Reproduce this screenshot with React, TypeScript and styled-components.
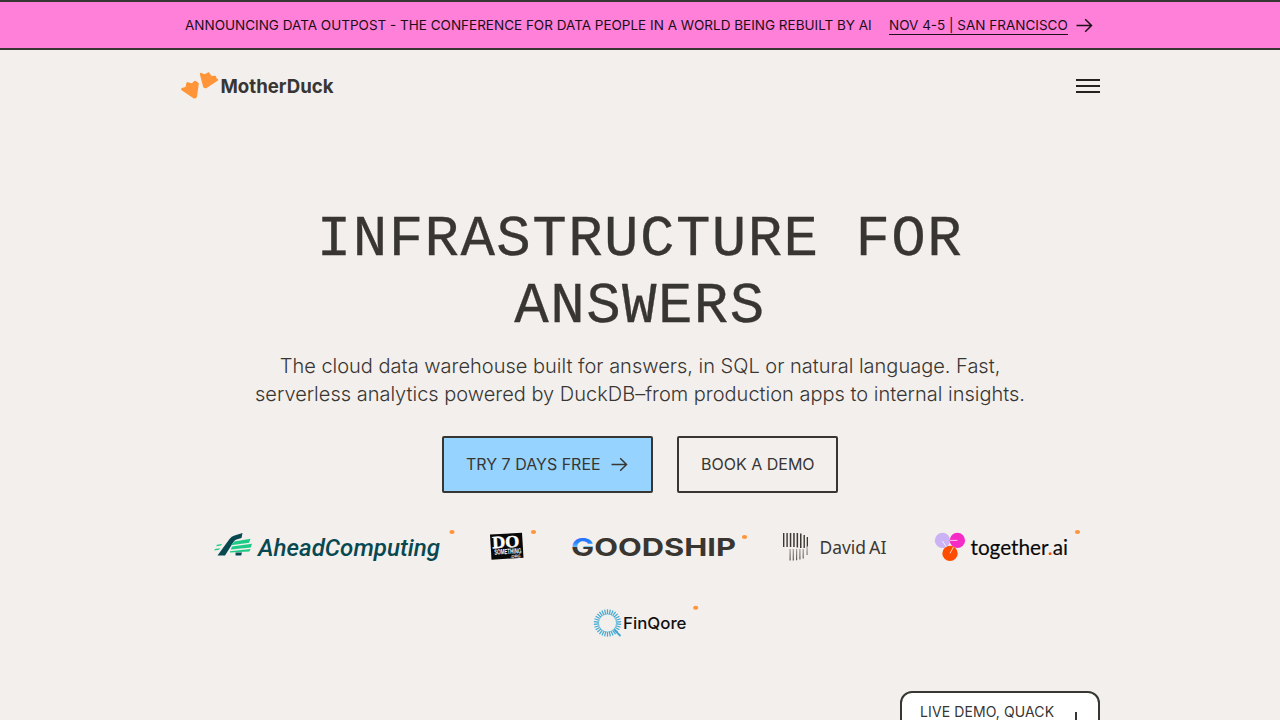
import React from "react";
import styled, { createGlobalStyle } from "styled-components";

const INK = "#383633";

const GlobalStyle = createGlobalStyle`
  * { box-sizing: border-box; }
  body { margin: 0; background: #f3efec; color: ${INK}; font-family: Inter, "Liberation Sans", sans-serif; }
`;

const Page = styled.div`
  height: 720px;
  overflow: hidden;
  display: flex;
  flex-direction: column;
  position: relative;
`;

const Banner = styled.a`
  height: 50px;
  flex: none;
  display: flex;
  align-items: center;
  padding-left: 185px;
  background: #ff80d9;
  border-top: 2px solid ${INK};
  border-bottom: 2px solid ${INK};
  color: #1c0f18;
  font-size: 13.5px;
  line-height: 20px;
  white-space: nowrap;
`;

const BannerText = styled.span`
  width: 704px;
`;

const BannerLink = styled.span`
  width: 179px;
  height: 20px;
  border-bottom: 1px solid #1c0f18;
  margin-right: 8px;
`;

const Header = styled.header`
  height: 72px;
  flex: none;
  display: flex;
  align-items: center;
  justify-content: space-between;
  padding: 0 180px;
`;

const Menu = styled.button`
  width: 24px;
  height: 14px;
  padding: 0;
  border: 0;
  background: none;
  display: flex;
  flex-direction: column;
  justify-content: space-between;
`;

const MenuBar = styled.span`
  width: 24px;
  height: 2px;
  background: #24211f;
`;

const Hero = styled.main`
  display: flex;
  flex-direction: column;
  align-items: center;
  padding-top: 84px;
`;

const Title = styled.h1`
  margin: 0;
  font: 400 57.5px/67px "Liberation Mono", monospace;
  letter-spacing: 1.4px;
  -webkit-text-stroke: 0.3px ${INK};
  text-align: center;
  width: 760px;
`;

const Lead = styled.p`
  margin: 12px 0 0;
  font-size: 20px;
  line-height: 28px;
  font-weight: 300;
  text-align: center;
  white-space: nowrap;
`;

const Actions = styled.div`
  display: flex;
  gap: 24px;
  margin-top: 28px;
`;

const Button = styled.a<{ $primary?: boolean; $width: number }>`
  width: ${(p) => p.$width}px;
  height: 57px;
  border: 2px solid ${INK};
  border-radius: 2px;
  background: ${(p) => (p.$primary ? "#96d4ff" : "transparent")};
  display: flex;
  align-items: center;
  padding: 0 0 1px 22px;
  gap: 10px;
  font-size: 16px;
  white-space: nowrap;
`;

const Logos = styled.div`
  display: flex;
  flex-wrap: wrap;
  justify-content: center;
  gap: 40px 34px;
  width: 920px;
  padding-left: 14px;
  margin-top: 36px;
`;

const Chat = styled.aside`
  position: absolute;
  left: 900px;
  top: 691px;
  width: 200px;
  height: 70px;
  padding: 10px 12px 0 18px;
  border: 2px solid ${INK};
  border-radius: 12px;
  background: #fff;
  display: flex;
  justify-content: space-between;
  font-size: 14px;
  line-height: 18px;
  letter-spacing: 0.1px;
  white-space: nowrap;
`;

const PlusIcon = styled.svg`
  flex: none;
  margin-top: 9px;
`;

const Arrow = ({ color = INK }: { color?: string }) => (
  <svg width="18" height="16" viewBox="0 0 18 16" fill="none" stroke={color} strokeWidth="1.5">
    <path d="M.5 8.5h15M9.2 2.2l6.3 6.3-6.3 6.3" />
  </svg>
);

const Dot = ({ x, y = 532 }: { x: number; y?: number }) => (
  <ellipse cx={x} cy={y} rx="2.6" ry="2" fill="#ff9538" />
);

const MotherDuck = () => (
  <svg width="156" height="32" viewBox="180 70 156 32">
    <g fill="#ff9538" stroke="#ff9538" strokeWidth="2.4" strokeLinejoin="round">
      <path d="M201 74l3.5 1.8 4-2.2 2.3 3.5 4.2-.2.5 2.6 1.5.2-11 7.3-1.6-.3z" />
      <path d="M182.3 89.2l4.2-1.4 1.1-4.5 4.5 1.3 3-2.7 2.5 1.8-1.8 12.8-1.3.9z" />
    </g>
    <text x="220.5" y="92.7" fontSize="19" fontWeight="700" textLength="113" lengthAdjust="spacingAndGlyphs" fill={INK}>MotherDuck</text>
  </svg>
);

const AheadComputing = () => (
  <svg width="242" height="36" viewBox="213 529 242 36">
    <g fill="#084850">
      <path d="M217.5 555.5l12-16.5q2-2.8 5-3.6l8-2.4-1 5-5 1.6q-2 .6-3.2 2.6l-8.3 13.3z" />
      <path d="M235.5 552.5h6.5l-.8 3h-5.6z" />
    </g>
    <g fill="#1dcb86">
      <path d="M234.5 541.5l16-2.8-1.4 4-18.3 2.6zM232 546.6l20-2.8-1.2 3.6-20 2.2zM230 551.2l20.6-2.3-1.2 2.6-19.4 1z" />
      <path d="M217 544.7l5-.8-1 1.6-4.8.7zM215 549l5-.8-1 1.6-4.8.7z" />
    </g>
    <text x="258" y="555.8" fontFamily="Roboto, sans-serif" fontStyle="italic" fontWeight="500" fontSize="23.5" textLength="182" lengthAdjust="spacingAndGlyphs" fill="#084850">AheadComputing</text>
    <Dot x={452} />
  </svg>
);

const DoSomething = () => (
  <svg width="48" height="36" viewBox="489 529 48 36">
    <path d="M490 534.5l32-1.8 1.5 25-32 2z" fill="#090909" />
    <g fill="#fff" fontWeight="700" transform="rotate(-3 507 547)">
      <text x="492.5" y="547.5" fontFamily="Liberation Serif, serif" fontSize="17" textLength="27" lengthAdjust="spacingAndGlyphs" stroke="#fff" strokeWidth=".5">DO</text>
      <text x="494" y="554" fontFamily="Liberation Sans, sans-serif" fontSize="7.5" textLength="27" lengthAdjust="spacingAndGlyphs">SOMETHING</text>
      <text x="510" y="558" fontFamily="Liberation Sans, sans-serif" fontSize="4" textLength="10">.ORG</text>
    </g>
    <Dot x={533.5} />
  </svg>
);

const Goodship = () => (
  <svg width="177" height="36" viewBox="571 529 177 36">
    <defs>
      <linearGradient id="goodship" gradientUnits="userSpaceOnUse" x1="578" y1="537" x2="578" y2="556">
        <stop offset="0" stopColor="#246bff" />
        <stop offset=".3" stopColor="#2d83ff" />
        <stop offset=".52" stopColor="#5cc6f8" />
        <stop offset=".54" stopColor="#393631" />
        <stop offset="1" stopColor="#393631" />
      </linearGradient>
    </defs>
    <text x="571" y="556" fontSize="24.5" fontWeight="700" textLength="165" lengthAdjust="spacingAndGlyphs" fill="#393631">
      <tspan fill="url(#goodship)">G</tspan>OODSHIP
    </text>
    <Dot x={744.5} y={537} />
  </svg>
);

const DavidAI = () => (
  <svg width="118" height="36" viewBox="782 529 118 36">
    <defs>
      <linearGradient id="david" x1="0" y1="0" x2="0" y2="1">
        <stop offset="0" stopColor="#b6b1ad" />
        <stop offset="1" stopColor="#57524e" />
      </linearGradient>
    </defs>
    <path fill="#3c3834" d="M783 533h1.4v14H783zM786.4 533h1.4v14h-1.4zM789.8 533h1.5v14h-1.5zM793.2 533h1.5v14h-1.5zM796.6 533h1.5v14.5h-1.5zM800 533.6h1.5V548H800zM803.5 535h1.4v13h-1.4zM806.7 537h1.3v10h-1.3z" />
    <path fill="url(#david)" d="M789.5 549h1.2v11.5h-1.2zM792.7 549h1.2v11.5h-1.2zM796 549h1.2v11.3H796zM799.3 549h1.2v10.5h-1.2zM802.6 549h1.2v9.5h-1.2zM806.5 546h1.2v9h-1.2z" />
    <text x="819.5" y="554" fontFamily="Noto Sans, sans-serif" fontSize="18" textLength="46.5" lengthAdjust="spacingAndGlyphs" fill="#3c3834">David</text>
    <text x="869" y="554" fontFamily="Noto Sans, sans-serif" fontSize="18" textLength="17.5" lengthAdjust="spacingAndGlyphs" fill="#3c3834">AI</text>
  </svg>
);

const Together = () => (
  <svg width="147" height="36" viewBox="934 529 147 36">
    <circle cx="942.5" cy="540.4" r="7.7" fill="#cab2f4" />
    <circle cx="957.4" cy="540.4" r="7.7" fill="#f52bc5" />
    <circle cx="950" cy="553.4" r="7.7" fill="#ff4d00" />
    <g stroke="#fff" strokeOpacity=".75" strokeWidth="1">
      <path d="M942.5 541l3.8 6M950 540.4h7.4M950 553.4l3.5-6.5" />
    </g>
    <text x="970.5" y="555" fontFamily="Lato, sans-serif" fontSize="21.5" textLength="97.5" lengthAdjust="spacingAndGlyphs" fill="#090909" stroke="#090909" strokeWidth=".15">
      together<tspan fill="#ff4d00" stroke="#ff4d00">.</tspan>ai
    </text>
    <Dot x={1077.5} />
  </svg>
);

const FinQore = () => (
  <svg width="108" height="36" viewBox="593 605 108 36">
    <g stroke="#40a8d2" strokeWidth="1.2">
      {Array.from({ length: 30 }, (_, i) => (
        <path key={i} d="M607.5 614v-4.7" transform={`rotate(${i * 12} 607.5 623)`} />
      ))}
      <path d="M614.5 630l6 6" strokeWidth="1.8" />
    </g>
    <circle cx="607.5" cy="623" r="9" fill="none" stroke="#55b6dc" strokeWidth=".8" />
    <text x="623" y="629.3" fontSize="16.5" fontWeight="500" textLength="63.5" lengthAdjust="spacingAndGlyphs" fill="#111">FinQore</text>
    <Dot x={695.7} y={607.8} />
  </svg>
);

export default function App() {
  return (
    <Page>
      <GlobalStyle />
      <Banner>
        <BannerText>ANNOUNCING DATA OUTPOST - THE CONFERENCE FOR DATA PEOPLE IN A WORLD BEING REBUILT BY AI</BannerText>
        <BannerLink>NOV 4-5 | SAN FRANCISCO</BannerLink>
        <Arrow color="#1c0f18" />
      </Banner>
      <Header>
        <MotherDuck />
        <Menu aria-label="Menu"><MenuBar /><MenuBar /><MenuBar /></Menu>
      </Header>
      <Hero>
        <Title>INFRASTRUCTURE FOR<br />ANSWERS</Title>
        <Lead>
          The cloud data warehouse built for answers, in SQL or natural language. Fast,<br />
          serverless analytics powered by DuckDB–from production apps to internal insights.
        </Lead>
        <Actions>
          <Button $primary $width={211}>TRY 7 DAYS FREE <Arrow /></Button>
          <Button $width={161}>BOOK A DEMO</Button>
        </Actions>
        <Logos>
          <AheadComputing />
          <DoSomething />
          <Goodship />
          <DavidAI />
          <Together />
          <FinQore />
        </Logos>
      </Hero>
      <Chat>
        <span>LIVE DEMO, QUACK</span>
        <PlusIcon width="20" height="20" viewBox="0 0 20 20" stroke={INK} strokeWidth="2">
          <path d="M10 0v20M0 10h20" />
        </PlusIcon>
      </Chat>
    </Page>
  );
}
